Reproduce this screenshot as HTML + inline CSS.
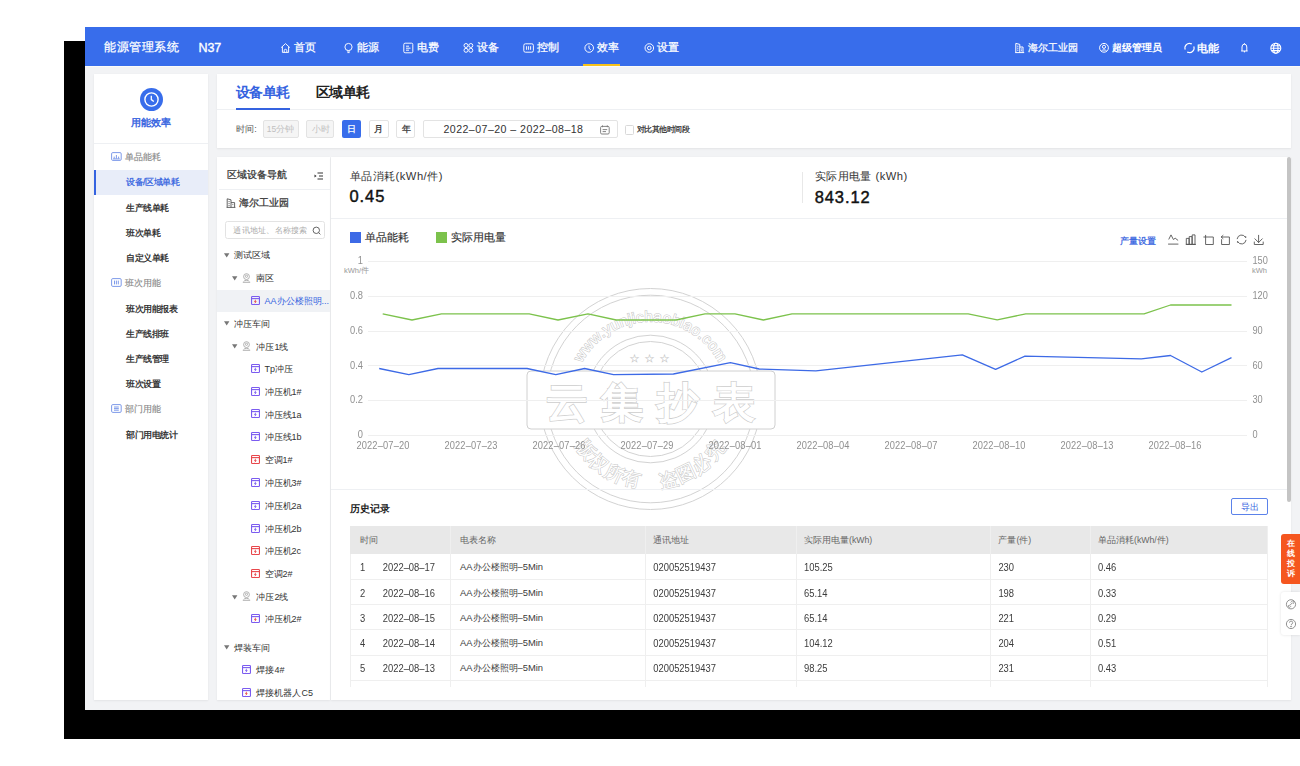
<!DOCTYPE html>
<html><head><meta charset="utf-8">
<style>
*{margin:0;padding:0;box-sizing:border-box}
html,body{width:1300px;height:766px;overflow:hidden;background:#fff;font-family:"Liberation Sans",sans-serif;color:#333}
.a{position:absolute;white-space:nowrap}
.t{position:absolute;white-space:nowrap;line-height:1}
.card{position:absolute;background:#fff;box-shadow:0 1px 2px rgba(0,0,0,.06),0 0 1px rgba(0,0,0,.04)}
.hw{color:#fff;font-weight:500}
svg{position:absolute;overflow:visible}
</style></head><body>

<div class="a" style="left:64px;top:41px;width:1236px;height:698px;background:#000"></div>
<div class="a" style="left:85px;top:27px;width:1215px;height:683px;background:#f2f3f5"></div>
<div class="a" style="left:85px;top:27px;width:1215px;height:39px;background:#386deb"></div>
<div class="a" style="left:85px;top:66px;width:1215px;height:1px;background:#fbfbf8"></div>
<div class="t" style="left:104px;top:41.2px;font-size:12px;color:#fff;-webkit-text-stroke:0.25px #fff;letter-spacing:0.6px">能源管理系统</div>
<div class="t" style="left:198.4px;top:42.0px;font-size:12.5px;color:#fff;-webkit-text-stroke:0.35px #fff">N37</div>
<svg style="left:280px;top:42px" width="12" height="12" viewBox="0 0 12 12" fill="none" stroke="#fff" stroke-width="0.95"><path d="M1.2 5.6 L5.5 1.6 L9.8 5.6 M2.4 4.6 V10.4 H8.6 V4.6 M4.2 10.4 V8.6 A1.3 1.3 0 0 1 6.8 8.6 V10.4"/></svg>
<div class="t" style="left:294.2px;top:42.2px;font-size:11px;color:#fff;-webkit-text-stroke:0.25px #fff;">首页</div>
<svg style="left:343px;top:42px" width="12" height="12" viewBox="0 0 12 12" fill="none" stroke="#fff" stroke-width="0.95"><circle cx="5.5" cy="5" r="3.6"/><path d="M4 9 H7 M4.4 10.6 H6.6"/></svg>
<div class="t" style="left:356.5px;top:42.2px;font-size:11px;color:#fff;-webkit-text-stroke:0.25px #fff;">能源</div>
<svg style="left:403px;top:42px" width="12" height="12" viewBox="0 0 12 12" fill="none" stroke="#fff" stroke-width="0.95"><rect x="0.8" y="1.2" width="9" height="9.6" rx="1.3"/><path d="M3 4.2 H6 M3 6.2 H7.5 M3 8.2 H6"/></svg>
<div class="t" style="left:416.5px;top:42.2px;font-size:11px;color:#fff;-webkit-text-stroke:0.25px #fff;">电费</div>
<svg style="left:463px;top:42px" width="12" height="12" viewBox="0 0 12 12" fill="none" stroke="#fff" stroke-width="0.95"><circle cx="3" cy="3.5" r="2"/><circle cx="7.8" cy="3.5" r="2"/><circle cx="3" cy="8.3" r="2"/><circle cx="7.8" cy="8.3" r="2"/></svg>
<div class="t" style="left:477.2px;top:42.2px;font-size:11px;color:#fff;-webkit-text-stroke:0.25px #fff;">设备</div>
<svg style="left:523px;top:42px" width="12" height="12" viewBox="0 0 12 12" fill="none" stroke="#fff" stroke-width="0.95"><rect x="0.8" y="1.8" width="9.6" height="8.4" rx="1.6"/><path d="M3.6 4.2 V7.8 M5.6 4.2 V7.8 M7.6 4.2 V7.8"/></svg>
<div class="t" style="left:537.1px;top:42.2px;font-size:11px;color:#fff;-webkit-text-stroke:0.25px #fff;">控制</div>
<svg style="left:583.5px;top:42px" width="12" height="12" viewBox="0 0 12 12" fill="none" stroke="#fff" stroke-width="0.95"><circle cx="5.2" cy="6" r="4.3"/><path d="M5 3.6 V6.3 L6.8 7.8"/></svg>
<div class="t" style="left:597.1px;top:42.2px;font-size:11px;color:#fff;-webkit-text-stroke:0.25px #fff;">效率</div>
<svg style="left:643.5px;top:42px" width="12" height="12" viewBox="0 0 12 12" fill="none" stroke="#fff" stroke-width="0.95"><circle cx="5.3" cy="6" r="4.3"/><circle cx="5.3" cy="6" r="1.8"/></svg>
<div class="t" style="left:657px;top:42.2px;font-size:11px;color:#fff;-webkit-text-stroke:0.25px #fff;">设置</div>
<div class="a" style="left:583px;top:64px;width:37px;height:2px;background:#f7c21a"></div>
<svg style="left:1014px;top:42px" width="12" height="12" viewBox="0 0 12 12" fill="none" stroke="#fff" stroke-width="1"><path d="M1.2 10.6 H10.2 M1.8 10.6 V1.4 L5.8 2.4 V10.6 M5.8 5 H9 V10.6 M3.2 4.2 H4.4 M3.2 6.2 H4.4 M3.2 8.2 H4.4 M7 7 H8 M7 8.8 H8"/></svg>
<div class="t" style="left:1027.9px;top:42.6px;font-size:10px;color:#fff;-webkit-text-stroke:0.25px #fff;">海尔工业园</div>
<svg style="left:1098.5px;top:42px" width="12" height="12" viewBox="0 0 12 12" fill="none" stroke="#fff" stroke-width="1"><circle cx="5" cy="5.8" r="4.4"/><circle cx="5" cy="4.8" r="1.6"/><path d="M2.4 9.2 C3.2 7.4 6.8 7.4 7.6 9.2"/></svg>
<div class="t" style="left:1111.6px;top:43.0px;font-size:10px;color:#fff;font-weight:700;">超级管理员</div>
<svg style="left:1183.5px;top:42px" width="12" height="12" viewBox="0 0 12 12" fill="none" stroke="#fff" stroke-width="1.1"><path d="M7.07 1.68 A4.6 4.6 0 0 0 1.18 7.57 M3.93 10.32 A4.6 4.6 0 0 0 9.82 4.43"/><circle cx="7.2" cy="1.7" r="0.7" fill="#fff" stroke="none"/><circle cx="3.8" cy="10.3" r="0.7" fill="#fff" stroke="none"/></svg>
<div class="t" style="left:1197px;top:43.0px;font-size:10.5px;color:#fff;font-weight:700;">电能</div>
<svg style="left:1240px;top:42px" width="10" height="12" viewBox="0 0 10 12" fill="none" stroke="#fff" stroke-width="1"><path d="M1.2 9 H7.6 M2 9 V5 A2.2 2.6 0 0 1 6.8 5 V9 M4.4 9 V10.4 M4.4 1.2 V2.4"/></svg>
<svg style="left:1270px;top:41.5px" width="13" height="13" viewBox="0 0 13 13" fill="none" stroke="#fff" stroke-width="1.1"><circle cx="5.8" cy="6.2" r="5"/><ellipse cx="5.8" cy="6.2" rx="2.2" ry="5"/><path d="M1 6.2 H10.6 M1.6 3.8 H10 M1.6 8.6 H10"/></svg>
<div class="card" style="left:94px;top:74px;width:114px;height:626px"></div>
<div class="card" style="left:217px;top:74px;width:1074px;height:73.5px"></div>
<div class="card" style="left:217px;top:157px;width:113px;height:543px"></div>
<div class="card" style="left:331px;top:157px;width:960px;height:543px"></div>
<svg style="left:140px;top:88px" width="23" height="23" viewBox="0 0 23 23"><circle cx="11.5" cy="11.5" r="11.5" fill="#386deb"/><circle cx="11.5" cy="11.5" r="6.6" fill="none" stroke="#fff" stroke-width="1.4"/><path d="M11.3 7.8 V11.6 L13.8 13.6" fill="none" stroke="#fff" stroke-width="1.3"/></svg>
<div class="t" style="left:131.2px;top:118.2px;font-size:10px;color:#3563e0;-webkit-text-stroke:0.4px #3563e0;">用能效率</div>
<div class="a" style="left:94px;top:143px;width:114px;height:1px;background:#eef0f3"></div>
<div class="a" style="left:94px;top:169.5px;width:114px;height:25.5px;background:#e8edf9"></div>
<div class="a" style="left:94px;top:169.5px;width:2px;height:25.5px;background:#3563e0"></div>
<svg style="left:110.5px;top:151.9px" width="11" height="9" viewBox="0 0 11 9" fill="none" stroke="#6f8fe6" stroke-width="0.9"><rect x="0.6" y="0.6" width="9.6" height="7.8" rx="1.2"/><path d="M3.2 6.6 V4.6 M5.4 6.6 V3 M7.6 6.6 V4.6 M2 6.9 H8.8"/></svg>
<div class="t" style="left:125.4px;top:152.6px;font-size:9px;color:#8a8a8a;-webkit-text-stroke:0.15px #8a8a8a;">单品能耗</div>
<div class="t" style="left:126.0px;top:178.2px;font-size:9px;color:#3563e0;-webkit-text-stroke:0.25px #3563e0;letter-spacing:-0.45px">设备/区域单耗</div>
<div class="t" style="left:126.0px;top:203.5px;font-size:9px;color:#222;-webkit-text-stroke:0.25px #222;letter-spacing:-0.45px">生产线单耗</div>
<div class="t" style="left:126.0px;top:228.89999999999998px;font-size:9px;color:#222;-webkit-text-stroke:0.25px #222;letter-spacing:-0.45px">班次单耗</div>
<div class="t" style="left:126.0px;top:253.89999999999998px;font-size:9px;color:#222;-webkit-text-stroke:0.25px #222;letter-spacing:-0.45px">自定义单耗</div>
<svg style="left:110.5px;top:277.9px" width="11" height="9" viewBox="0 0 11 9" fill="none" stroke="#6f8fe6" stroke-width="0.9"><rect x="0.6" y="0.6" width="9.6" height="7.8" rx="1.2"/><path d="M3.5 2.6 V6.4 M5.4 2.6 V6.4 M7.3 2.6 V6.4"/></svg>
<div class="t" style="left:125.4px;top:278.6px;font-size:9px;color:#8a8a8a;-webkit-text-stroke:0.15px #8a8a8a;">班次用能</div>
<div class="t" style="left:126.0px;top:304.59999999999997px;font-size:9px;color:#222;-webkit-text-stroke:0.25px #222;letter-spacing:-0.45px">班次用能报表</div>
<div class="t" style="left:126.0px;top:330.2px;font-size:9px;color:#222;-webkit-text-stroke:0.25px #222;letter-spacing:-0.45px">生产线排班</div>
<div class="t" style="left:126.0px;top:355.0px;font-size:9px;color:#222;-webkit-text-stroke:0.25px #222;letter-spacing:-0.45px">生产线管理</div>
<div class="t" style="left:126.0px;top:380.2px;font-size:9px;color:#222;-webkit-text-stroke:0.25px #222;letter-spacing:-0.45px">班次设置</div>
<svg style="left:110.5px;top:403.9px" width="11" height="9" viewBox="0 0 11 9" fill="none" stroke="#6f8fe6" stroke-width="0.9"><rect x="0.6" y="0.6" width="9.6" height="7.8" rx="1.2"/><path d="M3 3 H7.8 M3 4.6 H7.8 M3 6.2 H7.8"/></svg>
<div class="t" style="left:125.4px;top:404.6px;font-size:9px;color:#8a8a8a;-webkit-text-stroke:0.15px #8a8a8a;">部门用能</div>
<div class="t" style="left:126.0px;top:430.7px;font-size:9px;color:#222;-webkit-text-stroke:0.25px #222;letter-spacing:-0.45px">部门用电统计</div>
<div class="t" style="left:235.8px;top:85.1px;font-size:14px;color:#3563e0;font-weight:700;letter-spacing:-0.45px">设备单耗</div>
<div class="t" style="left:315.8px;top:85.1px;font-size:14px;color:#222;font-weight:700;letter-spacing:-0.45px">区域单耗</div>
<div class="a" style="left:217px;top:109px;width:1074px;height:1px;background:#eef0f3"></div>
<div class="a" style="left:235.8px;top:107.8px;width:54px;height:2px;background:#3563e0"></div>
<div class="t" style="left:236.2px;top:124.6px;font-size:9px;color:#555;">时间:</div>
<div class="a" style="left:263.2px;top:120.2px;width:35.60000000000002px;height:17.6px;background:#f5f5f5;border:1px solid #e3e3e3;border-radius:2px"></div>
<div class="t" style="left:266.8px;top:124.8px;font-size:8.5px;color:#c0c0c0;">15分钟</div>
<div class="a" style="left:306.2px;top:120.2px;width:27.69999999999999px;height:17.6px;background:#f5f5f5;border:1px solid #e3e3e3;border-radius:2px"></div>
<div class="t" style="left:311.5px;top:124.8px;font-size:8.5px;color:#c0c0c0;">小时</div>
<div class="a" style="left:341.6px;top:120.2px;width:19.599999999999966px;height:17.6px;background:#386deb;border-radius:2px"></div>
<div class="t" style="left:347.2px;top:124.8px;font-size:8.5px;color:#fff;-webkit-text-stroke:0.25px #fff;">日</div>
<div class="a" style="left:368.5px;top:120.2px;width:20.0px;height:17.6px;background:#fff;border:1px solid #e3e3e3;border-radius:2px"></div>
<div class="t" style="left:374.3px;top:124.8px;font-size:8.5px;color:#333;-webkit-text-stroke:0.25px #333;">月</div>
<div class="a" style="left:396px;top:120.2px;width:19.399999999999977px;height:17.6px;background:#fff;border:1px solid #e3e3e3;border-radius:2px"></div>
<div class="t" style="left:401.5px;top:124.8px;font-size:8.5px;color:#333;-webkit-text-stroke:0.25px #333;">年</div>
<div class="a" style="left:422.6px;top:120.3px;width:195px;height:17.3px;background:#fff;border:1px solid #e3e3e3;border-radius:2px"></div>
<div class="t" style="left:443.5px;top:123.8px;font-size:10.6px;color:#333;letter-spacing:0.45px">2022–07–20 – 2022–08–18</div>
<svg style="left:599.5px;top:124.5px" width="10" height="10" viewBox="0 0 10 10" fill="none" stroke="#777" stroke-width="0.9"><rect x="0.6" y="1.4" width="8.6" height="7.6" rx="1.2"/><path d="M2.5 0.4 V2.2 M7.3 0.4 V2.2 M2.6 4.6 H7.2 M2.6 6.6 H6"/></svg>
<div class="a" style="left:625px;top:125.3px;width:8.6px;height:9.3px;background:#fff;border:1px solid #d9d9d9;border-radius:1.5px"></div>
<div class="t" style="left:636.5px;top:125.8px;font-size:8px;color:#333;-webkit-text-stroke:0.25px #333;letter-spacing:-0.45px">对比其他时间段</div>
<div class="t" style="left:226.9px;top:169.9px;font-size:9.5px;color:#333;-webkit-text-stroke:0.25px #333;">区域设备导航</div>
<svg style="left:313.5px;top:171.5px" width="10" height="8" viewBox="0 0 10 8" fill="none" stroke="#333" stroke-width="1"><path d="M3.5 1 H9 M5 4 H9 M3.5 7 H9"/><path d="M0.5 2.5 L2.6 4 L0.5 5.5 Z" fill="#333" stroke="none"/></svg>
<div class="a" style="left:219px;top:189px;width:111px;height:1px;background:#eef0f3"></div>
<svg style="left:226px;top:197.5px" width="10" height="10" viewBox="0 0 10 10" fill="none" stroke="#555" stroke-width="0.9"><path d="M0.6 9.4 H9.4 M1.2 9.4 V0.8 L5 1.8 V9.4 M5 4.6 H8.6 V9.4 M2.5 3.6 H3.6 M2.5 5.6 H3.6 M2.5 7.6 H3.6 M6.4 6.6 H7.3"/></svg>
<div class="t" style="left:239.2px;top:197.6px;font-size:10px;color:#333;-webkit-text-stroke:0.25px #333;">海尔工业园</div>
<div class="a" style="left:225.2px;top:221.3px;width:100.2px;height:17.3px;background:#fff;border:1px solid #e3e3e3;border-radius:2.5px"></div>
<div class="t" style="left:233.4px;top:227.0px;font-size:8px;color:#aaa;letter-spacing:0.25px">通讯地址、名称搜索</div>
<svg style="left:311.5px;top:225.5px" width="10" height="10" viewBox="0 0 10 10" fill="none" stroke="#555" stroke-width="0.9"><circle cx="4.3" cy="4.3" r="3.2"/><path d="M6.6 6.6 L8.4 8.4"/></svg>
<div class="a" style="left:217px;top:289.5px;width:113px;height:22px;background:#f0f2f5"></div>
<svg style="left:224.4px;top:253.1px" width="6" height="5" viewBox="0 0 6 5"><path d="M0 0.3 H5.4 L2.7 4.6 Z" fill="#777"/></svg>
<div class="t" style="left:233.8px;top:251.29999999999998px;font-size:9px;color:#333;">测试区域</div>
<svg style="left:232.2px;top:276.0px" width="6" height="5" viewBox="0 0 6 5"><path d="M0 0.3 H5.4 L2.7 4.6 Z" fill="#777"/></svg>
<svg style="left:242px;top:272.6px" width="9" height="10" viewBox="0 0 9 10" fill="none" stroke="#a8a8a8" stroke-width="0.9"><circle cx="4.5" cy="3.6" r="2.9"/><circle cx="4.5" cy="3.3" r="1.1"/><path d="M0.8 9.3 H8.2 M1.6 8.6 C2 7 7 7 7.4 8.6"/></svg>
<div class="t" style="left:256.4px;top:274.20000000000005px;font-size:9px;color:#333;">南区</div>
<svg style="left:250.6px;top:295.7px" width="9" height="9" viewBox="0 0 9 9" fill="none" stroke-width="1.1"><rect x="0.55" y="0.55" width="7.9" height="7.9" rx="0.8" stroke="#7b5cf0"/><path d="M0.6 2.6 H8.4" stroke="#7b5cf0"/><path d="M5 3.8 L3.4 5.4 L5.2 5.6 L3.8 7.2" stroke="#e8474c" stroke-width="0.9"/></svg>
<div class="t" style="left:264.5px;top:296.8px;font-size:9px;color:#3563e0;">AA办公楼照明...</div>
<svg style="left:224.4px;top:321.4px" width="6" height="5" viewBox="0 0 6 5"><path d="M0 0.3 H5.4 L2.7 4.6 Z" fill="#777"/></svg>
<div class="t" style="left:233.8px;top:319.6px;font-size:9px;color:#333;">冲压车间</div>
<svg style="left:232.2px;top:344.29999999999995px" width="6" height="5" viewBox="0 0 6 5"><path d="M0 0.3 H5.4 L2.7 4.6 Z" fill="#777"/></svg>
<svg style="left:242px;top:340.9px" width="9" height="10" viewBox="0 0 9 10" fill="none" stroke="#a8a8a8" stroke-width="0.9"><circle cx="4.5" cy="3.6" r="2.9"/><circle cx="4.5" cy="3.3" r="1.1"/><path d="M0.8 9.3 H8.2 M1.6 8.6 C2 7 7 7 7.4 8.6"/></svg>
<div class="t" style="left:256.4px;top:342.5px;font-size:9px;color:#333;">冲压1线</div>
<svg style="left:250.6px;top:363.9px" width="9" height="9" viewBox="0 0 9 9" fill="none" stroke-width="1.1"><rect x="0.55" y="0.55" width="7.9" height="7.9" rx="0.8" stroke="#7b5cf0"/><path d="M0.6 2.6 H8.4" stroke="#7b5cf0"/><path d="M5 3.8 L3.4 5.4 L5.2 5.6 L3.8 7.2" stroke="#7b5cf0" stroke-width="0.9"/></svg>
<div class="t" style="left:264.5px;top:365.0px;font-size:9px;color:#333;">Tp冲压</div>
<svg style="left:250.6px;top:386.8px" width="9" height="9" viewBox="0 0 9 9" fill="none" stroke-width="1.1"><rect x="0.55" y="0.55" width="7.9" height="7.9" rx="0.8" stroke="#7b5cf0"/><path d="M0.6 2.6 H8.4" stroke="#7b5cf0"/><path d="M5 3.8 L3.4 5.4 L5.2 5.6 L3.8 7.2" stroke="#7b5cf0" stroke-width="0.9"/></svg>
<div class="t" style="left:264.5px;top:387.90000000000003px;font-size:9px;color:#333;">冲压机1#</div>
<svg style="left:250.6px;top:409.4px" width="9" height="9" viewBox="0 0 9 9" fill="none" stroke-width="1.1"><rect x="0.55" y="0.55" width="7.9" height="7.9" rx="0.8" stroke="#7b5cf0"/><path d="M0.6 2.6 H8.4" stroke="#7b5cf0"/><path d="M5 3.8 L3.4 5.4 L5.2 5.6 L3.8 7.2" stroke="#7b5cf0" stroke-width="0.9"/></svg>
<div class="t" style="left:264.5px;top:410.5px;font-size:9px;color:#333;">冲压线1a</div>
<svg style="left:250.6px;top:432.2px" width="9" height="9" viewBox="0 0 9 9" fill="none" stroke-width="1.1"><rect x="0.55" y="0.55" width="7.9" height="7.9" rx="0.8" stroke="#7b5cf0"/><path d="M0.6 2.6 H8.4" stroke="#7b5cf0"/><path d="M5 3.8 L3.4 5.4 L5.2 5.6 L3.8 7.2" stroke="#7b5cf0" stroke-width="0.9"/></svg>
<div class="t" style="left:264.5px;top:433.3px;font-size:9px;color:#333;">冲压线1b</div>
<svg style="left:250.6px;top:454.8px" width="9" height="9" viewBox="0 0 9 9" fill="none" stroke-width="1.1"><rect x="0.55" y="0.55" width="7.9" height="7.9" rx="0.8" stroke="#e8474c"/><path d="M0.6 2.6 H8.4" stroke="#e8474c"/><path d="M5 3.8 L3.4 5.4 L5.2 5.6 L3.8 7.2" stroke="#e8474c" stroke-width="0.9"/></svg>
<div class="t" style="left:264.5px;top:455.90000000000003px;font-size:9px;color:#333;">空调1#</div>
<svg style="left:250.6px;top:478.0px" width="9" height="9" viewBox="0 0 9 9" fill="none" stroke-width="1.1"><rect x="0.55" y="0.55" width="7.9" height="7.9" rx="0.8" stroke="#7b5cf0"/><path d="M0.6 2.6 H8.4" stroke="#7b5cf0"/><path d="M5 3.8 L3.4 5.4 L5.2 5.6 L3.8 7.2" stroke="#7b5cf0" stroke-width="0.9"/></svg>
<div class="t" style="left:264.5px;top:479.1px;font-size:9px;color:#333;">冲压机3#</div>
<svg style="left:250.6px;top:500.6px" width="9" height="9" viewBox="0 0 9 9" fill="none" stroke-width="1.1"><rect x="0.55" y="0.55" width="7.9" height="7.9" rx="0.8" stroke="#7b5cf0"/><path d="M0.6 2.6 H8.4" stroke="#7b5cf0"/><path d="M5 3.8 L3.4 5.4 L5.2 5.6 L3.8 7.2" stroke="#7b5cf0" stroke-width="0.9"/></svg>
<div class="t" style="left:264.5px;top:501.70000000000005px;font-size:9px;color:#333;">冲压机2a</div>
<svg style="left:250.6px;top:523.5px" width="9" height="9" viewBox="0 0 9 9" fill="none" stroke-width="1.1"><rect x="0.55" y="0.55" width="7.9" height="7.9" rx="0.8" stroke="#7b5cf0"/><path d="M0.6 2.6 H8.4" stroke="#7b5cf0"/><path d="M5 3.8 L3.4 5.4 L5.2 5.6 L3.8 7.2" stroke="#7b5cf0" stroke-width="0.9"/></svg>
<div class="t" style="left:264.5px;top:524.6px;font-size:9px;color:#333;">冲压机2b</div>
<svg style="left:250.6px;top:546.3px" width="9" height="9" viewBox="0 0 9 9" fill="none" stroke-width="1.1"><rect x="0.55" y="0.55" width="7.9" height="7.9" rx="0.8" stroke="#e8474c"/><path d="M0.6 2.6 H8.4" stroke="#e8474c"/><path d="M5 3.8 L3.4 5.4 L5.2 5.6 L3.8 7.2" stroke="#e8474c" stroke-width="0.9"/></svg>
<div class="t" style="left:264.5px;top:547.4px;font-size:9px;color:#333;">冲压机2c</div>
<svg style="left:250.6px;top:568.9px" width="9" height="9" viewBox="0 0 9 9" fill="none" stroke-width="1.1"><rect x="0.55" y="0.55" width="7.9" height="7.9" rx="0.8" stroke="#e8474c"/><path d="M0.6 2.6 H8.4" stroke="#e8474c"/><path d="M5 3.8 L3.4 5.4 L5.2 5.6 L3.8 7.2" stroke="#e8474c" stroke-width="0.9"/></svg>
<div class="t" style="left:264.5px;top:570.0px;font-size:9px;color:#333;">空调2#</div>
<svg style="left:232.2px;top:594.6999999999999px" width="6" height="5" viewBox="0 0 6 5"><path d="M0 0.3 H5.4 L2.7 4.6 Z" fill="#777"/></svg>
<svg style="left:242px;top:591.3px" width="9" height="10" viewBox="0 0 9 10" fill="none" stroke="#a8a8a8" stroke-width="0.9"><circle cx="4.5" cy="3.6" r="2.9"/><circle cx="4.5" cy="3.3" r="1.1"/><path d="M0.8 9.3 H8.2 M1.6 8.6 C2 7 7 7 7.4 8.6"/></svg>
<div class="t" style="left:256.4px;top:592.9px;font-size:9px;color:#333;">冲压2线</div>
<svg style="left:250.6px;top:614.3px" width="9" height="9" viewBox="0 0 9 9" fill="none" stroke-width="1.1"><rect x="0.55" y="0.55" width="7.9" height="7.9" rx="0.8" stroke="#7b5cf0"/><path d="M0.6 2.6 H8.4" stroke="#7b5cf0"/><path d="M5 3.8 L3.4 5.4 L5.2 5.6 L3.8 7.2" stroke="#e8474c" stroke-width="0.9"/></svg>
<div class="t" style="left:264.5px;top:615.4px;font-size:9px;color:#333;">冲压机2#</div>
<svg style="left:224.4px;top:645.4px" width="6" height="5" viewBox="0 0 6 5"><path d="M0 0.3 H5.4 L2.7 4.6 Z" fill="#777"/></svg>
<div class="t" style="left:233.8px;top:643.6px;font-size:9px;color:#333;">焊装车间</div>
<svg style="left:242.4px;top:665.1px" width="9" height="9" viewBox="0 0 9 9" fill="none" stroke-width="1.1"><rect x="0.55" y="0.55" width="7.9" height="7.9" rx="0.8" stroke="#7b5cf0"/><path d="M0.6 2.6 H8.4" stroke="#7b5cf0"/><path d="M5 3.8 L3.4 5.4 L5.2 5.6 L3.8 7.2" stroke="#7b5cf0" stroke-width="0.9"/></svg>
<div class="t" style="left:256.4px;top:666.2px;font-size:9px;color:#333;">焊接4#</div>
<svg style="left:242.4px;top:687.9px" width="9" height="9" viewBox="0 0 9 9" fill="none" stroke-width="1.1"><rect x="0.55" y="0.55" width="7.9" height="7.9" rx="0.8" stroke="#7b5cf0"/><path d="M0.6 2.6 H8.4" stroke="#7b5cf0"/><path d="M5 3.8 L3.4 5.4 L5.2 5.6 L3.8 7.2" stroke="#e8474c" stroke-width="0.9"/></svg>
<div class="t" style="left:256.4px;top:689.0px;font-size:9px;color:#333;">焊接机器人C5</div>
<div class="t" style="left:349.5px;top:171.2px;font-size:11.2px;color:#333;letter-spacing:0.5px">单品消耗(kWh/件)</div>
<div class="t" style="left:349.5px;top:188.3px;font-size:16.5px;color:#111;letter-spacing:0.9px;-webkit-text-stroke:0.45px #111">0.45</div>
<div class="a" style="left:801.5px;top:172px;width:1px;height:31px;background:#e8e8e8"></div>
<div class="t" style="left:814.7px;top:171.2px;font-size:11.2px;color:#333;letter-spacing:0.45px">实际用电量 (kWh)</div>
<div class="t" style="left:814.7px;top:188.8px;font-size:16.5px;color:#111;letter-spacing:0.9px;-webkit-text-stroke:0.45px #111">843.12</div>
<div class="a" style="left:331px;top:218px;width:956px;height:1px;background:#eef0f3"></div>
<div class="a" style="left:350.2px;top:232px;width:10.7px;height:10.5px;background:#3d6ae6"></div>
<div class="t" style="left:364.8px;top:232.3px;font-size:10.6px;color:#333;-webkit-text-stroke:0.15px #333;">单品能耗</div>
<div class="a" style="left:436.2px;top:232px;width:10.7px;height:10.5px;background:#7cc24c"></div>
<div class="t" style="left:450.5px;top:232.3px;font-size:10.6px;color:#333;-webkit-text-stroke:0.15px #333;">实际用电量</div>
<div class="t" style="left:1120.2px;top:236.8px;font-size:9px;color:#3563e0;-webkit-text-stroke:0.25px #3563e0;letter-spacing:-0.1px">产量设置</div>
<svg style="left:1168px;top:233.5px" width="98" height="12" viewBox="0 0 98 12" fill="none" stroke="#555" stroke-width="0.9" stroke-linejoin="round" stroke-linecap="round">
 <path d="M0.5 10.1 H10 M0.9 5.1 L3 0.9 L5.4 5.5 L7.2 4.2 L9.8 6.2"/>
 <path d="M18.2 10.4 H27.6"/><rect x="18.7" y="4.4" width="2.4" height="6"/><rect x="21.6" y="2.6" width="2.4" height="7.8"/><rect x="24.6" y="0.9" width="2.4" height="9.5"/>
 <path d="M35.8 3 H45.3 V10.5 H37.6 V1.3"/>
 <path d="M53.3 3 L55 1.4 M53.3 3 L55 4.6 M53.5 3 H61.4 V10.5 H53.6 V5.6"/>
 <path d="M69.17 4.72 A4.5 4.5 0 0 1 77.5 3.25 M78.03 6.28 A4.5 4.5 0 0 1 69.7 7.75"/><circle cx="77.6" cy="3.1" r="0.75" fill="#555" stroke="none"/><circle cx="69.6" cy="7.9" r="0.75" fill="#555" stroke="none"/>
 <path d="M90.6 1.3 V8.4 M86.9 4.8 L90.6 8.5 L94.3 4.8 M86.3 8 V10.5 H95.2 V8"/>
</svg>
<svg style="left:0;top:0;pointer-events:none" width="1300" height="766" viewBox="0 0 1300 766">
<defs>
<path id="arcT" d="M 573 399 A 77.5 77.5 0 0 1 728 399"/>
<path id="arcB" d="M 561.5 399 A 89 89 0 0 0 739.5 399"/>
<mask id="rm"><rect x="0" y="0" width="1300" height="766" fill="#fff"/><rect x="527" y="371" width="248" height="58" rx="4" fill="#000"/></mask>
</defs>
<g fill="none" stroke="#cdcdcd" stroke-width="0.9" mask="url(#rm)">
<circle cx="650.5" cy="399" r="110.5"/>
<circle cx="650.5" cy="399" r="103.8"/>
<circle cx="650.5" cy="399" r="63.8"/>
<circle cx="650.5" cy="399" r="57.5"/>
</g>
<rect x="527" y="371" width="248" height="58" rx="4" fill="none" stroke="#d0d0d0" stroke-width="1"/>
<text font-family="Liberation Sans, sans-serif" font-size="15" fill="#fff" stroke="#c8c8c8" stroke-width="1.1" paint-order="stroke" letter-spacing="0.4"><textPath href="#arcT" startOffset="50%" text-anchor="middle">www.yunjichaobiao.com</textPath></text>
<text font-family="Liberation Sans, sans-serif" font-size="19" fill="#fff" stroke="#c8c8c8" stroke-width="1.1" paint-order="stroke" letter-spacing="1"><textPath href="#arcB" startOffset="50%" text-anchor="middle">版权所有　盗图必究</textPath></text>
<text x="657" y="416.5" font-family="Liberation Sans, sans-serif" font-size="42" font-weight="700" fill="#fff" stroke="#cdcdcd" stroke-width="1.4" paint-order="stroke" text-anchor="middle" letter-spacing="13.7">云集抄表</text>
<text x="652" y="362" font-size="10" fill="#fff" stroke="#cacaca" stroke-width="0.6" text-anchor="middle" letter-spacing="6">★★★</text>
</svg>
<div class="a" style="left:368px;top:261.0px;width:879px;height:1px;background:#efefef"></div>
<div class="t" style="left:300px;width:63px;text-align:right;top:257.2px;font-size:9.3px;color:#909090;transform:scaleY(1.18)">1</div>
<div class="t" style="left:1252.5px;top:257.2px;font-size:9.2px;color:#909090;transform:scaleY(1.18)">150</div>
<div class="a" style="left:368px;top:295.8px;width:879px;height:1px;background:#efefef"></div>
<div class="t" style="left:300px;width:63px;text-align:right;top:292.0px;font-size:9.3px;color:#909090;transform:scaleY(1.18)">0.8</div>
<div class="t" style="left:1252.5px;top:292.0px;font-size:9.2px;color:#909090;transform:scaleY(1.18)">120</div>
<div class="a" style="left:368px;top:330.6px;width:879px;height:1px;background:#efefef"></div>
<div class="t" style="left:300px;width:63px;text-align:right;top:326.8px;font-size:9.3px;color:#909090;transform:scaleY(1.18)">0.6</div>
<div class="t" style="left:1252.5px;top:326.8px;font-size:9.2px;color:#909090;transform:scaleY(1.18)">90</div>
<div class="a" style="left:368px;top:365.4px;width:879px;height:1px;background:#efefef"></div>
<div class="t" style="left:300px;width:63px;text-align:right;top:361.59999999999997px;font-size:9.3px;color:#909090;transform:scaleY(1.18)">0.4</div>
<div class="t" style="left:1252.5px;top:361.59999999999997px;font-size:9.2px;color:#909090;transform:scaleY(1.18)">60</div>
<div class="a" style="left:368px;top:400.2px;width:879px;height:1px;background:#efefef"></div>
<div class="t" style="left:300px;width:63px;text-align:right;top:396.4px;font-size:9.3px;color:#909090;transform:scaleY(1.18)">0.2</div>
<div class="t" style="left:1252.5px;top:396.4px;font-size:9.2px;color:#909090;transform:scaleY(1.18)">30</div>
<div class="a" style="left:368px;top:435.0px;width:879px;height:1px;background:#efefef"></div>
<div class="t" style="left:300px;width:63px;text-align:right;top:431.2px;font-size:9.3px;color:#909090;transform:scaleY(1.18)">0</div>
<div class="t" style="left:1252.5px;top:431.2px;font-size:9.2px;color:#909090;transform:scaleY(1.18)">0</div>
<div class="t" style="left:344px;top:267px;font-size:7.5px;color:#999;">kWh/件</div>
<div class="t" style="left:1252px;top:267px;font-size:7.5px;color:#999;">kWh</div>
<div class="t" style="left:343px;width:80px;text-align:center;top:441.90000000000003px;font-size:9.3px;color:#909090;letter-spacing:0.15px;transform:scaleY(1.18)">2022–07–20</div>
<div class="t" style="left:431px;width:80px;text-align:center;top:441.90000000000003px;font-size:9.3px;color:#909090;letter-spacing:0.15px;transform:scaleY(1.18)">2022–07–23</div>
<div class="t" style="left:519px;width:80px;text-align:center;top:441.90000000000003px;font-size:9.3px;color:#909090;letter-spacing:0.15px;transform:scaleY(1.18)">2022–07–26</div>
<div class="t" style="left:607px;width:80px;text-align:center;top:441.90000000000003px;font-size:9.3px;color:#909090;letter-spacing:0.15px;transform:scaleY(1.18)">2022–07–29</div>
<div class="t" style="left:695px;width:80px;text-align:center;top:441.90000000000003px;font-size:9.3px;color:#909090;letter-spacing:0.15px;transform:scaleY(1.18)">2022–08–01</div>
<div class="t" style="left:783px;width:80px;text-align:center;top:441.90000000000003px;font-size:9.3px;color:#909090;letter-spacing:0.15px;transform:scaleY(1.18)">2022–08–04</div>
<div class="t" style="left:871px;width:80px;text-align:center;top:441.90000000000003px;font-size:9.3px;color:#909090;letter-spacing:0.15px;transform:scaleY(1.18)">2022–08–07</div>
<div class="t" style="left:959px;width:80px;text-align:center;top:441.90000000000003px;font-size:9.3px;color:#909090;letter-spacing:0.15px;transform:scaleY(1.18)">2022–08–10</div>
<div class="t" style="left:1047px;width:80px;text-align:center;top:441.90000000000003px;font-size:9.3px;color:#909090;letter-spacing:0.15px;transform:scaleY(1.18)">2022–08–13</div>
<div class="t" style="left:1135px;width:80px;text-align:center;top:441.90000000000003px;font-size:9.3px;color:#909090;letter-spacing:0.15px;transform:scaleY(1.18)">2022–08–16</div>
<div class="a" style="left:331px;top:488.5px;width:956px;height:1px;background:#eef0f3"></div>
<svg style="left:0;top:0" width="1300" height="766" viewBox="0 0 1300 766">
<polyline points="382.7,313.8 412.0,320.0 441.5,313.8 529.2,313.8 558.0,320.0 588.0,313.8 616.2,320.0 676.0,320.0 705.0,313.8 735.0,313.8 763.4,320.0 792.0,313.8 968.2,313.8 997.2,319.9 1025.8,313.8 1144.1,313.8 1170.5,305.0 1231.5,305.0" fill="none" stroke="#7cc24c" stroke-width="1.3" stroke-linejoin="round"/>
<polyline points="379.2,368.5 408.8,374.7 438.0,368.5 527.0,368.5 555.8,374.7 584.6,368.5 613.5,374.7 673.4,374.0 730.4,362.7 759.2,369.0 815.8,370.8 962.3,354.9 995.6,369.3 1025.0,356.1 1141.3,358.9 1170.5,355.5 1201.8,372.0 1231.5,357.7" fill="none" stroke="#3d6ae6" stroke-width="1.3" stroke-linejoin="round"/>
</svg>
<div class="t" style="left:350px;top:503.8px;font-size:9.6px;color:#222;font-weight:700;">历史记录</div>
<div class="a" style="left:1230.9px;top:498.2px;width:36.7px;height:17.3px;border:1px solid #5b82ea;border-radius:2px;background:#fff"></div>
<div class="t" style="left:1241px;top:502.8px;font-size:8.5px;color:#3563e0;">导出</div>
<div class="a" style="left:350.3px;top:526.3px;width:917px;height:27.3px;background:#e8e8e8"></div>
<div class="a" style="left:450.4px;top:526.3px;width:1px;height:160.5px;background:#efefef"></div>
<div class="a" style="left:645.1px;top:526.3px;width:1px;height:160.5px;background:#efefef"></div>
<div class="a" style="left:795.5px;top:526.3px;width:1px;height:160.5px;background:#efefef"></div>
<div class="a" style="left:990.2px;top:526.3px;width:1px;height:160.5px;background:#efefef"></div>
<div class="a" style="left:1089.7px;top:526.3px;width:1px;height:160.5px;background:#efefef"></div>
<div class="a" style="left:350.3px;top:553.6px;width:1px;height:133.2px;background:#efefef"></div>
<div class="a" style="left:1266.7px;top:526.3px;width:1px;height:160.5px;background:#efefef"></div>
<div class="a" style="left:350.3px;top:578.9px;width:917px;height:1px;background:#efefef"></div>
<div class="a" style="left:350.3px;top:604.15px;width:917px;height:1px;background:#efefef"></div>
<div class="a" style="left:350.3px;top:629.4px;width:917px;height:1px;background:#efefef"></div>
<div class="a" style="left:350.3px;top:654.65px;width:917px;height:1px;background:#efefef"></div>
<div class="a" style="left:350.3px;top:679.9px;width:917px;height:1px;background:#efefef"></div>
<div class="t" style="left:359.7px;top:536.1999999999999px;font-size:8.7px;color:#666;">时间</div>
<div class="t" style="left:460px;top:536.1999999999999px;font-size:8.7px;color:#666;">电表名称</div>
<div class="t" style="left:653.3px;top:536.1999999999999px;font-size:8.7px;color:#666;">通讯地址</div>
<div class="t" style="left:804px;top:536.1999999999999px;font-size:8.7px;color:#666;">实际用电量(kWh)</div>
<div class="t" style="left:998.4px;top:536.1999999999999px;font-size:8.7px;color:#666;">产量(件)</div>
<div class="t" style="left:1098px;top:536.1999999999999px;font-size:8.7px;color:#666;">单品消耗(kWh/件)</div>
<div class="t" style="left:360px;top:562.3px;font-size:9.4px;color:#3c3c3c;transform:scaleY(1.2)">1</div>
<div class="t" style="left:382.8px;top:562.3px;font-size:9.4px;color:#3c3c3c;transform:scaleY(1.2)">2022–08–17</div>
<div class="t" style="left:460px;top:562.3px;font-size:9.4px;color:#3c3c3c;">AA办公楼照明–5Min</div>
<div class="t" style="left:653.3px;top:562.3px;font-size:9.4px;color:#3c3c3c;transform:scaleY(1.2)">020052519437</div>
<div class="t" style="left:804px;top:562.3px;font-size:9.4px;color:#3c3c3c;transform:scaleY(1.2)">105.25</div>
<div class="t" style="left:998.4px;top:562.3px;font-size:9.4px;color:#3c3c3c;transform:scaleY(1.2)">230</div>
<div class="t" style="left:1098px;top:562.3px;font-size:9.4px;color:#3c3c3c;transform:scaleY(1.2)">0.46</div>
<div class="t" style="left:360px;top:587.55px;font-size:9.4px;color:#3c3c3c;transform:scaleY(1.2)">2</div>
<div class="t" style="left:382.8px;top:587.55px;font-size:9.4px;color:#3c3c3c;transform:scaleY(1.2)">2022–08–16</div>
<div class="t" style="left:460px;top:587.55px;font-size:9.4px;color:#3c3c3c;">AA办公楼照明–5Min</div>
<div class="t" style="left:653.3px;top:587.55px;font-size:9.4px;color:#3c3c3c;transform:scaleY(1.2)">020052519437</div>
<div class="t" style="left:804px;top:587.55px;font-size:9.4px;color:#3c3c3c;transform:scaleY(1.2)">65.14</div>
<div class="t" style="left:998.4px;top:587.55px;font-size:9.4px;color:#3c3c3c;transform:scaleY(1.2)">198</div>
<div class="t" style="left:1098px;top:587.55px;font-size:9.4px;color:#3c3c3c;transform:scaleY(1.2)">0.33</div>
<div class="t" style="left:360px;top:612.8px;font-size:9.4px;color:#3c3c3c;transform:scaleY(1.2)">3</div>
<div class="t" style="left:382.8px;top:612.8px;font-size:9.4px;color:#3c3c3c;transform:scaleY(1.2)">2022–08–15</div>
<div class="t" style="left:460px;top:612.8px;font-size:9.4px;color:#3c3c3c;">AA办公楼照明–5Min</div>
<div class="t" style="left:653.3px;top:612.8px;font-size:9.4px;color:#3c3c3c;transform:scaleY(1.2)">020052519437</div>
<div class="t" style="left:804px;top:612.8px;font-size:9.4px;color:#3c3c3c;transform:scaleY(1.2)">65.14</div>
<div class="t" style="left:998.4px;top:612.8px;font-size:9.4px;color:#3c3c3c;transform:scaleY(1.2)">221</div>
<div class="t" style="left:1098px;top:612.8px;font-size:9.4px;color:#3c3c3c;transform:scaleY(1.2)">0.29</div>
<div class="t" style="left:360px;top:638.05px;font-size:9.4px;color:#3c3c3c;transform:scaleY(1.2)">4</div>
<div class="t" style="left:382.8px;top:638.05px;font-size:9.4px;color:#3c3c3c;transform:scaleY(1.2)">2022–08–14</div>
<div class="t" style="left:460px;top:638.05px;font-size:9.4px;color:#3c3c3c;">AA办公楼照明–5Min</div>
<div class="t" style="left:653.3px;top:638.05px;font-size:9.4px;color:#3c3c3c;transform:scaleY(1.2)">020052519437</div>
<div class="t" style="left:804px;top:638.05px;font-size:9.4px;color:#3c3c3c;transform:scaleY(1.2)">104.12</div>
<div class="t" style="left:998.4px;top:638.05px;font-size:9.4px;color:#3c3c3c;transform:scaleY(1.2)">204</div>
<div class="t" style="left:1098px;top:638.05px;font-size:9.4px;color:#3c3c3c;transform:scaleY(1.2)">0.51</div>
<div class="t" style="left:360px;top:663.3px;font-size:9.4px;color:#3c3c3c;transform:scaleY(1.2)">5</div>
<div class="t" style="left:382.8px;top:663.3px;font-size:9.4px;color:#3c3c3c;transform:scaleY(1.2)">2022–08–13</div>
<div class="t" style="left:460px;top:663.3px;font-size:9.4px;color:#3c3c3c;">AA办公楼照明–5Min</div>
<div class="t" style="left:653.3px;top:663.3px;font-size:9.4px;color:#3c3c3c;transform:scaleY(1.2)">020052519437</div>
<div class="t" style="left:804px;top:663.3px;font-size:9.4px;color:#3c3c3c;transform:scaleY(1.2)">98.25</div>
<div class="t" style="left:998.4px;top:663.3px;font-size:9.4px;color:#3c3c3c;transform:scaleY(1.2)">231</div>
<div class="t" style="left:1098px;top:663.3px;font-size:9.4px;color:#3c3c3c;transform:scaleY(1.2)">0.43</div>
<div class="a" style="left:1287.2px;top:157px;width:4px;height:345px;background:#c4c4c4;border-radius:2px"></div>
<div class="a" style="left:1281.4px;top:534px;width:19px;height:50px;background:#f5561f;border-radius:3px 0 0 3px"></div>
<div class="a" style="left:1285.5px;top:538.6px;width:10px;font-size:8px;line-height:10.3px;color:#fff;font-weight:700;white-space:normal;text-align:center">在线投诉</div>
<div class="a" style="left:1281.4px;top:592px;width:19px;height:43.3px;background:#fff;border-radius:3px 0 0 3px;box-shadow:0 0 3px rgba(0,0,0,.12)"></div>
<svg style="left:1285.5px;top:598.5px" width="11" height="32" viewBox="0 0 11 32" fill="none" stroke="#888" stroke-width="0.9"><circle cx="5" cy="5.3" r="4.6"/><path d="M3.4 6.8 L6.6 3.6 M4.6 3.4 L5.6 2.5 A1.1 1.1 0 0 1 7.6 4.2 L6.8 5 M3.2 5.8 L2.6 6.4 A1.1 1.1 0 0 0 4.2 8 L5 7.2"/><circle cx="5" cy="25" r="4.6"/><path d="M3.5 23.6 A1.6 1.6 0 1 1 5.4 25.2 V26.2"/><circle cx="5" cy="27.6" r="0.4" fill="#888"/></svg>
</body></html>
